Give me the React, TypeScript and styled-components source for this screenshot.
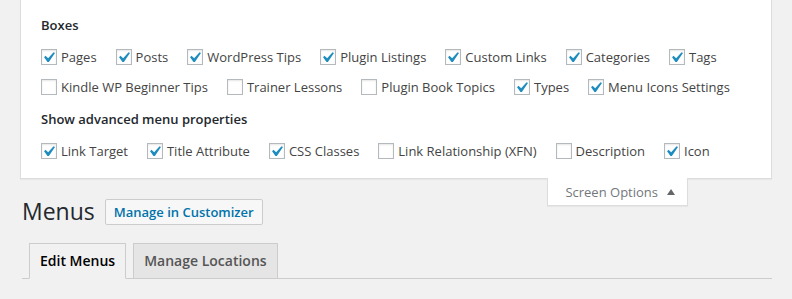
import styled, { createGlobalStyle } from "styled-components";

const GlobalStyle = createGlobalStyle`
  html, body {
    margin: 0;
    padding: 0;
    background: #f1f1f1;
  }
  body {
    font-family: "Open Sans", "Liberation Sans", sans-serif;
    font-size: 13px;
    line-height: 1.4em;
    color: #444;
  }
`;

type Option = { label: string; checked: boolean };

const boxRows: Option[][] = [
  [
    { label: "Pages", checked: true },
    { label: "Posts", checked: true },
    { label: "WordPress Tips", checked: true },
    { label: "Plugin Listings", checked: true },
    { label: "Custom Links", checked: true },
    { label: "Categories", checked: true },
    { label: "Tags", checked: true },
  ],
  [
    { label: "Kindle WP Beginner Tips", checked: false },
    { label: "Trainer Lessons", checked: false },
    { label: "Plugin Book Topics", checked: false },
    { label: "Types", checked: true },
    { label: "Menu Icons Settings", checked: true },
  ],
];

const advancedRows: Option[][] = [
  [
    { label: "Link Target", checked: true },
    { label: "Title Attribute", checked: true },
    { label: "CSS Classes", checked: true },
    { label: "Link Relationship (XFN)", checked: false },
    { label: "Description", checked: false },
    { label: "Icon", checked: true },
  ],
];

function Checkbox({ checked }: { checked: boolean }) {
  return (
    <Box>
      {checked ? (
        <Tick viewBox="0 0 20 20">
          <path d="M14.83 4.89l1.34.94-5.81 8.38H9.02L5.78 9.67l1.34-1.25 2.57 2.4z" />
        </Tick>
      ) : null}
    </Box>
  );
}

function OptionGroup({ title, rows }: { title: string; rows: Option[][] }) {
  return (
    <>
      <GroupTitle>{title}</GroupTitle>
      {rows.map((row, i) => (
        <OptionRow key={i}>
          {row.map((o) => (
            <OptionLabel key={o.label}>
              <Checkbox checked={o.checked} />
              {o.label}
            </OptionLabel>
          ))}
        </OptionRow>
      ))}
    </>
  );
}

export default function App() {
  return (
    <>
      <GlobalStyle />
      <ScreenMeta>
        <OptionGroup title="Boxes" rows={boxRows} />
        <OptionGroup title="Show advanced menu properties" rows={advancedRows} />
      </ScreenMeta>
      <ScreenOptionsTab>
        Screen Options
        <Arrow viewBox="0 0 20 20">
          <path d="M7 13l4.03-6L15 13H7z" />
        </Arrow>
      </ScreenOptionsTab>
      <Wrap>
        <PageTitle>
          Menus
          <TitleAction>Manage in Customizer</TitleAction>
        </PageTitle>
        <TabWrapper>
          <NavTab $active>Edit Menus</NavTab>
          <NavTab>Manage Locations</NavTab>
        </TabWrapper>
      </Wrap>
    </>
  );
}

const ScreenMeta = styled.div`
  margin: 0 20px -1px 20px;
  padding: 8px 20px 12px;
  background: #fff;
  border: 1px solid #ddd;
  border-top: 0;
  box-shadow: 0 1px 1px rgba(0, 0, 0, 0.04);
`;

const GroupTitle = styled.h5`
  margin: 8px 0;
  font-size: 13px;
  font-weight: 600;
  line-height: 1.4em;
  color: #23282d;
`;

const OptionRow = styled.div`
  display: flex;
  column-gap: 19px;
`;

const OptionLabel = styled.label`
  display: flex;
  align-items: center;
  height: 30px;
  white-space: nowrap;
`;

const Box = styled.span`
  position: relative;
  width: 16px;
  height: 16px;
  margin-right: 4px;
  box-sizing: border-box;
  border: 1px solid #b4b9be;
  background: #fff;
  box-shadow: inset 0 1px 2px rgba(0, 0, 0, 0.1);
`;

const Tick = styled.svg`
  position: absolute;
  left: -4px;
  top: -3px;
  width: 21px;
  height: 21px;
  fill: #1e8cbe;
`;

const ScreenOptionsTab = styled.div`
  float: right;
  display: flex;
  align-items: center;
  margin-right: 104px;
  padding: 4px 7px 3px 17px;
  line-height: 20px;
  background: #fff;
  color: #72777c;
  border: 1px solid #ddd;
  border-top: 0;
  box-shadow: 0 1px 1px rgba(0, 0, 0, 0.04);
`;

const Arrow = styled.svg`
  width: 20px;
  height: 20px;
  margin-left: 2px;
  fill: #666;
`;

const Wrap = styled.div`
  margin: 10px 20px 0 22px;
`;

const PageTitle = styled.h1`
  display: flex;
  align-items: center;
  gap: 10px;
  margin: 0;
  padding: 9px 0 4px;
  font-size: 23px;
  font-weight: 400;
  line-height: 29px;
  color: #23282d;
`;

const TitleAction = styled.a`
  padding: 4px 8px;
  border: 1px solid #ccc;
  border-radius: 2px;
  background: #f7f7f7;
  font-size: 13px;
  font-weight: 600;
  line-height: 16px;
  color: #0073aa;
  text-decoration: none;
`;

const TabWrapper = styled.div`
  display: flex;
  align-items: flex-end;
  padding-top: 13px;
  border-bottom: 1px solid #ccc;
`;

const NavTab = styled.a<{ $active?: boolean }>`
  margin-left: 7px;
  margin-bottom: ${(p) => (p.$active ? "-1px" : "0")};
  padding: 5px 10px;
  border: 1px solid #ccc;
  border-bottom: ${(p) => (p.$active ? "1px solid #f1f1f1" : "none")};
  background: ${(p) => (p.$active ? "#f1f1f1" : "#e5e5e5")};
  color: ${(p) => (p.$active ? "#000" : "#555")};
  font-size: 14px;
  font-weight: 600;
  line-height: 24px;
  text-decoration: none;
`;
